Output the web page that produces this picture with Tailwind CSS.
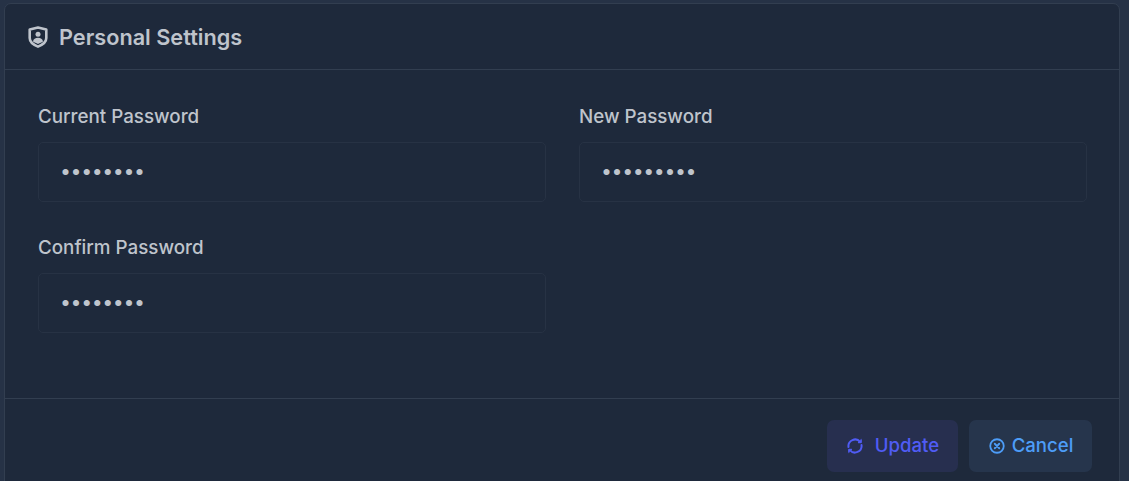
<!DOCTYPE html>
<html lang="en">
<head>
    <meta charset="UTF-8" />
    <title>Personal Settings</title>
    <script src="https://cdn.jsdelivr.net/npm/@tailwindcss/browser@4"></script>
</head>
<body class="bg-[#263246] h-[481px] overflow-hidden font-['Inter',sans-serif]">

<div class="ml-[4px] mt-[3px] w-[1116px] h-[500px] bg-[#1e293b] border border-[#323e50] rounded-[7px] flex flex-col">
    <div class="h-[66px] flex items-center gap-[11px] pl-[23px] border-b border-[#323e50] shrink-0">
        <svg class="w-[20px] h-[22px] text-[#bfc4cc]" viewBox="0 0 20 22" fill="none" stroke="currentColor" stroke-width="2.600" stroke-linejoin="round">
            <path d="M10 1.600 18.300 3.400V12c0 3.800-3.400 6.700-8.300 8.600C5.100 18.700 1.700 15.800 1.700 12V3.400z"/>
            <circle cx="10" cy="8.300" r="2.500" fill="currentColor" stroke="none"/>
            <path d="M5 15.500c.4-2.600 2.400-3.800 5-3.800s4.600 1.200 5 3.800c-1.500 1-3 1.600-5 2.400-2-.8-3.500-1.400-5-2.400z" fill="currentColor" stroke="none"/>
        </svg>
        <h2 class="text-[21.700px] font-semibold text-[#bfc4cc] relative top-[1px]">Personal Settings</h2>
    </div>

    <div class="h-[329px] shrink-0 border-b border-[#323e50] pl-[33px] pr-[32px] pt-[34px]">
        <div class="grid grid-cols-2 gap-x-[33px] gap-y-[33px]">
            <div>
                <label class="block text-[18.800px] leading-[26px] font-[550] text-[#bfc4cc] mb-[12px]">Current Password</label>
                <div class="h-[60px] border border-[#273244] rounded-[5px] pl-[21px] flex items-center text-[#bfc4cc] text-[19.500px] tracking-[-0.4px]">••••••••</div>
            </div>
            <div>
                <label class="block text-[18.800px] leading-[26px] font-[550] text-[#bfc4cc] mb-[12px]">New Password</label>
                <div class="h-[60px] border border-[#273244] rounded-[5px] pl-[21px] flex items-center text-[#bfc4cc] text-[19.500px] tracking-[-0.4px]">•••••••••</div>
            </div>
            <div>
                <label class="block text-[18.800px] leading-[26px] font-[550] text-[#bfc4cc] mb-[12px]">Confirm Password</label>
                <div class="h-[60px] border border-[#273244] rounded-[5px] pl-[21px] flex items-center text-[#bfc4cc] text-[19.500px] tracking-[-0.4px]">••••••••</div>
            </div>
        </div>
    </div>

    <div class="flex justify-end gap-[11px] pt-[21px] pr-[27px]">
        <button class="w-[131px] h-[52px] rounded-[7px] bg-[#272f4f] text-[#505cf5] text-[18.600px] font-medium flex items-center justify-center gap-[11px]">
            <svg class="w-[18px] h-[18px]" viewBox="0 0 18 18" fill="none" stroke="currentColor" stroke-width="2" stroke-linecap="round" stroke-linejoin="round">
                <path d="M2.500 10A6.600 6.600 0 0 1 14.200 5"/>
                <path d="M15.500 8A6.600 6.600 0 0 1 3.800 13"/>
                <path d="M15.300 2.800v2.900h-2.900z" fill="currentColor" stroke-width="1"/>
                <path d="M2.700 15.200v-2.900h2.900z" fill="currentColor" stroke-width="1"/>
            </svg>
            Update
        </button>
        <button class="w-[123px] h-[52px] rounded-[7px] bg-[#26354c] text-[#4d9df8] text-[18.600px] font-medium flex items-center justify-center gap-[6px]">
            <svg class="w-[18px] h-[18px]" viewBox="0 0 24 24" fill="none" stroke="currentColor" stroke-width="2.400" stroke-linecap="round">
                <circle cx="12" cy="12" r="9"/>
                <path d="m9 9 6 6M15 9l-6 6"/>
            </svg>
            Cancel
        </button>
    </div>
</div>

</body>
</html>
